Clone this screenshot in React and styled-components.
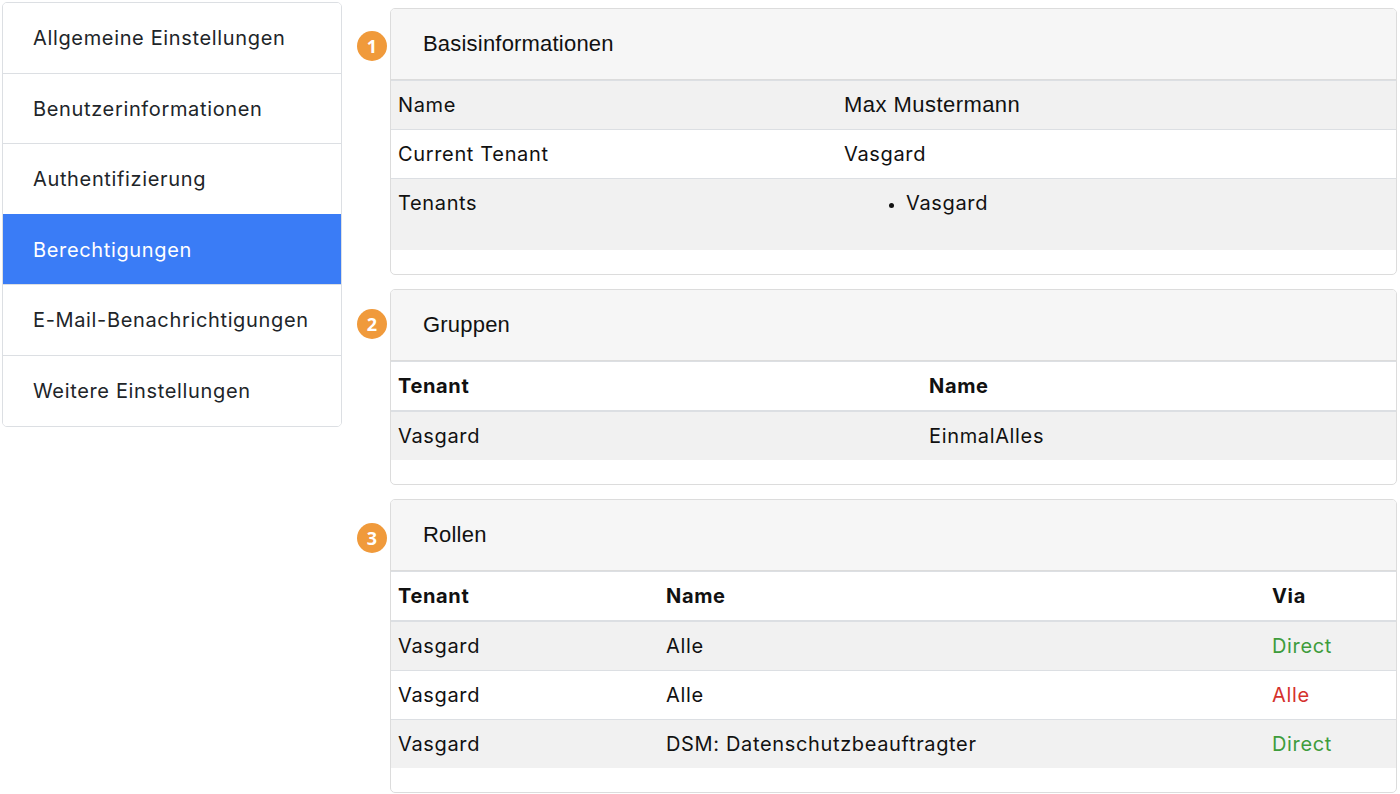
import React from "react";
import styled, { createGlobalStyle } from "styled-components";

const GlobalStyle = createGlobalStyle`
  html, body {
    margin: 0;
    padding: 0;
    background: #ffffff;
  }
  body {
    font-family: Inter, "Noto Sans", sans-serif;
    color: #212529;
    letter-spacing: 0.65px;
  }
`;

const Page = styled.div`
  display: flex;
  align-items: flex-start;
  padding: 2px 3px 0 2px;
`;

const Sidebar = styled.div`
  box-sizing: border-box;
  width: 340px;
  flex-shrink: 0;
  display: flex;
  flex-direction: column;
  border: 1px solid #dcdfe3;
  border-radius: 5px;
  overflow: hidden;
`;

const NavItem = styled.div`
  padding: 20px 30px 19.6px;
  font-size: 20px;
  line-height: 30px;
  color: ${({ active }) => (active ? "#ffffff" : "#212529")};
  background: ${({ active }) => (active ? "#3a7cf6" : "#ffffff")};
  border-top: 1px solid ${({ active }) => (active ? "#3a7cf6" : "#dcdfe3")};
  &:first-child {
    border-top: none;
  }
`;

const Main = styled.div`
  flex: 1;
  display: flex;
  flex-direction: column;
  gap: 14px;
  margin-left: 15px;
  padding-top: 6px;
`;

const Section = styled.div`
  display: grid;
  grid-template-columns: 30px 1fr;
  column-gap: 3px;
  align-items: start;
`;

const Badge = styled.div`
  width: 30px;
  height: 30px;
  margin-top: ${({ offset }) => offset || 23}px;
  border-radius: 50%;
  background: #f09a3b;
  color: #ffffff;
  font-family: "Open Sans", sans-serif;
  font-weight: 700;
  font-size: 18px;
  letter-spacing: 0;
  display: flex;
  align-items: center;
  justify-content: center;
`;

const Card = styled.div`
  border: 1px solid #dcdcdc;
  border-radius: 5px;
  overflow: hidden;
  background: #ffffff;
`;

const CardHeader = styled.div`
  height: 70px;
  display: flex;
  align-items: center;
  padding: 0 32px;
  background: #f6f6f6;
  border-bottom: 1px solid #dcdcdc;
  font-family: "Liberation Sans", Arial, sans-serif;
  font-size: 22px;
  letter-spacing: 0.2px;
  color: #111111;
`;

const Table = styled.table`
  width: 100%;
  border-collapse: collapse;
  table-layout: fixed;
  margin-bottom: 24px;
  font-size: 20px;
  color: #111111;
`;

const Th = styled.th`
  text-align: left;
  font-weight: 700;
  padding: 9px 7px;
  line-height: 30px;
  border-top: 1px solid #dcdfe3;
  border-bottom: 2px solid #dcdfe3;
`;

const Row = styled.tr`
  background: ${({ striped }) => (striped ? "#f1f1f1" : "#ffffff")};
`;

const Td = styled.td`
  padding: 9px 7px;
  line-height: 30px;
  vertical-align: top;
  border-top: 1px solid #dcdfe3;
  color: ${({ tone }) =>
    tone === "green" ? "#3e9c3c" : tone === "red" ? "#d5322d" : "#111111"};
  ${({ classic }) =>
    classic &&
    `
    font-family: "Liberation Sans", Arial, sans-serif;
    font-size: 22px;
    letter-spacing: 0.45px;
  `}
`;

const List = styled.ul`
  margin: 0 0 23px;
  padding-left: 62px;
  li::marker {
    font-size: 16px;
  }
`;

const navItems = [
  "Allgemeine Einstellungen",
  "Benutzerinformationen",
  "Authentifizierung",
  "Berechtigungen",
  "E-Mail-Benachrichtigungen",
  "Weitere Einstellungen",
];

const roles = [
  { tenant: "Vasgard", name: "Alle", via: "Direct", tone: "green" },
  { tenant: "Vasgard", name: "Alle", via: "Alle", tone: "red" },
  {
    tenant: "Vasgard",
    name: "DSM: Datenschutzbeauftragter",
    via: "Direct",
    tone: "green",
  },
];

export default function App() {
  return (
    <>
      <GlobalStyle />
      <Page>
        <Sidebar>
          {navItems.map((item) => (
            <NavItem key={item} active={item === "Berechtigungen"}>
              {item}
            </NavItem>
          ))}
        </Sidebar>

        <Main>
          <Section>
            <Badge offset={23}>1</Badge>
            <Card>
              <CardHeader>Basisinformationen</CardHeader>
              <Table>
                <colgroup>
                  <col style={{ width: 446 }} />
                  <col />
                </colgroup>
                <tbody>
                  <Row striped>
                    <Td>Name</Td>
                    <Td classic>Max Mustermann</Td>
                  </Row>
                  <Row>
                    <Td>Current Tenant</Td>
                    <Td>Vasgard</Td>
                  </Row>
                  <Row striped>
                    <Td>Tenants</Td>
                    <Td>
                      <List>
                        <li>Vasgard</li>
                      </List>
                    </Td>
                  </Row>
                </tbody>
              </Table>
            </Card>
          </Section>

          <Section>
            <Badge offset={20}>2</Badge>
            <Card>
              <CardHeader>Gruppen</CardHeader>
              <Table>
                <colgroup>
                  <col style={{ width: 531 }} />
                  <col />
                </colgroup>
                <thead>
                  <tr>
                    <Th>Tenant</Th>
                    <Th>Name</Th>
                  </tr>
                </thead>
                <tbody>
                  <Row striped>
                    <Td>Vasgard</Td>
                    <Td>EinmalAlles</Td>
                  </Row>
                </tbody>
              </Table>
            </Card>
          </Section>

          <Section>
            <Badge offset={24}>3</Badge>
            <Card>
              <CardHeader>Rollen</CardHeader>
              <Table>
                <colgroup>
                  <col style={{ width: 268 }} />
                  <col style={{ width: 606 }} />
                  <col />
                </colgroup>
                <thead>
                  <tr>
                    <Th>Tenant</Th>
                    <Th>Name</Th>
                    <Th>Via</Th>
                  </tr>
                </thead>
                <tbody>
                  {roles.map((r, i) => (
                    <Row key={i} striped={i % 2 === 0}>
                      <Td>{r.tenant}</Td>
                      <Td>{r.name}</Td>
                      <Td tone={r.tone}>{r.via}</Td>
                    </Row>
                  ))}
                </tbody>
              </Table>
            </Card>
          </Section>
        </Main>
      </Page>
    </>
  );
}
